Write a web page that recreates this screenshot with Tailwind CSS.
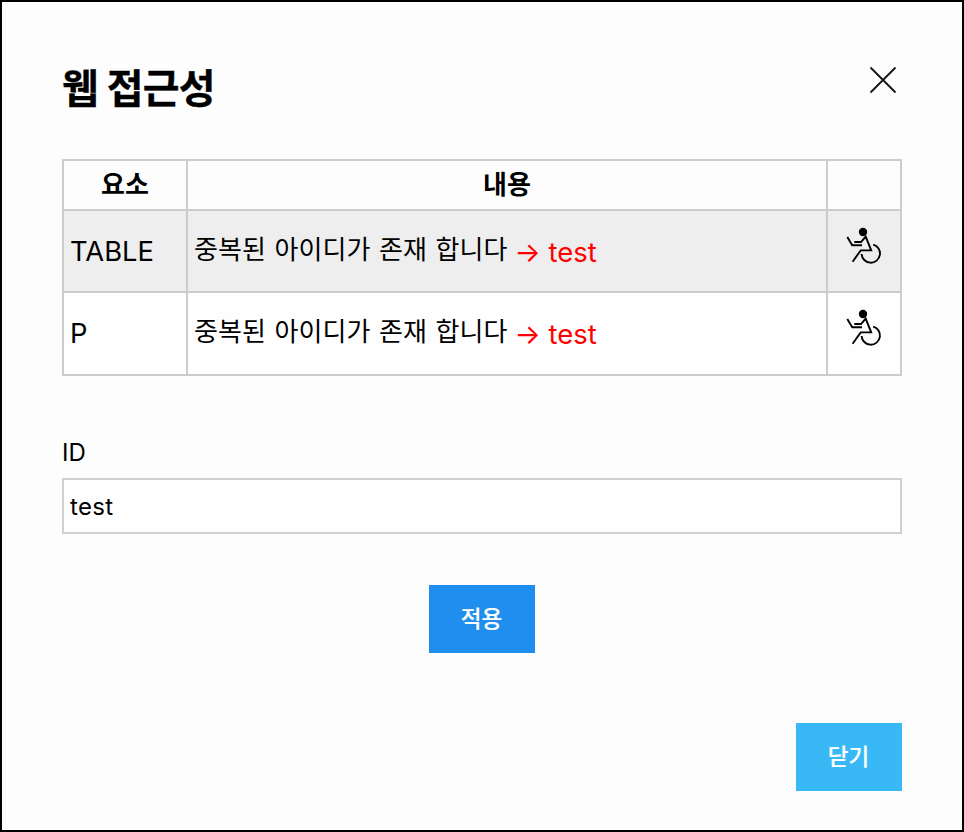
<!DOCTYPE html>
<html lang="ko">
<head>
<meta charset="utf-8">
<title>웹 접근성</title>
<script src="https://cdn.jsdelivr.net/npm/@tailwindcss/browser@4"></script>
</head>
<body class="bg-[#fdfdfd] text-black font-[Inter,'Noto_Sans_CJK_KR',sans-serif]">
<svg class="hidden">
  <symbol id="wheelchair" viewBox="0 0 50 50">
    <circle cx="23" cy="12" r="4.2" fill="#000"/>
    <path d="M7.3 17 12.2 25.2H22M14.3 22H21L25.7 16.6 31.2 30.4H20.7L12.6 41.8M33.2 24.6A9.2 9.2 0 1 1 21.6 34" fill="none" stroke="#000" stroke-width="1.9"/>
  </symbol>
</svg>
<main class="flex h-[832px] w-[964px] flex-col border-2 border-black px-[60px] pt-[57px]">
  <header class="flex h-[60px] items-start justify-between">
    <h1 class="text-[40px] leading-[60px] font-bold tracking-[-0.75px] [-webkit-text-stroke:0.3px_black]">웹 접근성</h1>
    <button class="mt-[7px] mr-[5px]" aria-label="닫기"><svg class="block size-7" viewBox="0 0 28 28" fill="none" stroke="#111" stroke-width="1.8"><path d="M1.5 1.5 26.5 26.5M26.5 1.5 1.5 26.5"/></svg></button>
  </header>
  <div class="mt-10 grid h-[217px] shrink-0 grid-cols-[122px_638px_72px] grid-rows-[48px_80px_81px] gap-0.5 border-2 border-[#ccc] bg-[#ccc] text-[26px] leading-8 *:flex *:items-center *:px-1.5">
    <div class="justify-center bg-[#fdfdfd] font-bold">요소</div>
    <div class="justify-center bg-[#fdfdfd] font-bold">내용</div>
    <div class="bg-[#fdfdfd]"></div>
    <div class="bg-[#eee] pt-0.5 text-[27.3px]">TABLE</div>
    <div class="bg-[#eee]"><span class="pb-0.5 tracking-[0.1px] [word-spacing:1px]">중복된 아이디가 존재 합니다</span><span class="ml-[7px] pt-0.5 text-[27.5px] text-[#f00]">→ test</span></div>
    <div class="justify-center bg-[#eee] pb-3 pl-2!"><svg class="size-[50px] shrink-0"><use href="#wheelchair"/></svg></div>
    <div class="bg-[#fefefe] text-[27.3px]">P</div>
    <div class="bg-[#fefefe] pb-px"><span class="pb-0.5 tracking-[0.1px] [word-spacing:1px]">중복된 아이디가 존재 합니다</span><span class="ml-[7px] pt-0.5 text-[27.5px] text-[#f00]">→ test</span></div>
    <div class="justify-center bg-[#fefefe] pb-[13px] pl-2!"><svg class="size-[50px] shrink-0"><use href="#wheelchair"/></svg></div>
  </div>
  <label for="id" class="mt-[61px] text-[24px] leading-8">ID</label>
  <input id="id" value="test" class="mt-[9px] h-14 border-2 border-[#d0d0d0] bg-[#fefefe] px-1.5 text-[24px] tracking-[0.3px]">
  <button class="mt-[51px] h-[68px] w-[106px] self-center bg-[#208eee] pr-px text-[22.5px] font-medium text-white [-webkit-text-stroke:0.2px_white]">적용</button>
  <button class="mt-[70px] h-[68px] w-[106px] self-end bg-[#38b8f4] pr-px text-[22.5px] font-medium text-white [-webkit-text-stroke:0.2px_white]">닫기</button>
</main>
</body>
</html>
